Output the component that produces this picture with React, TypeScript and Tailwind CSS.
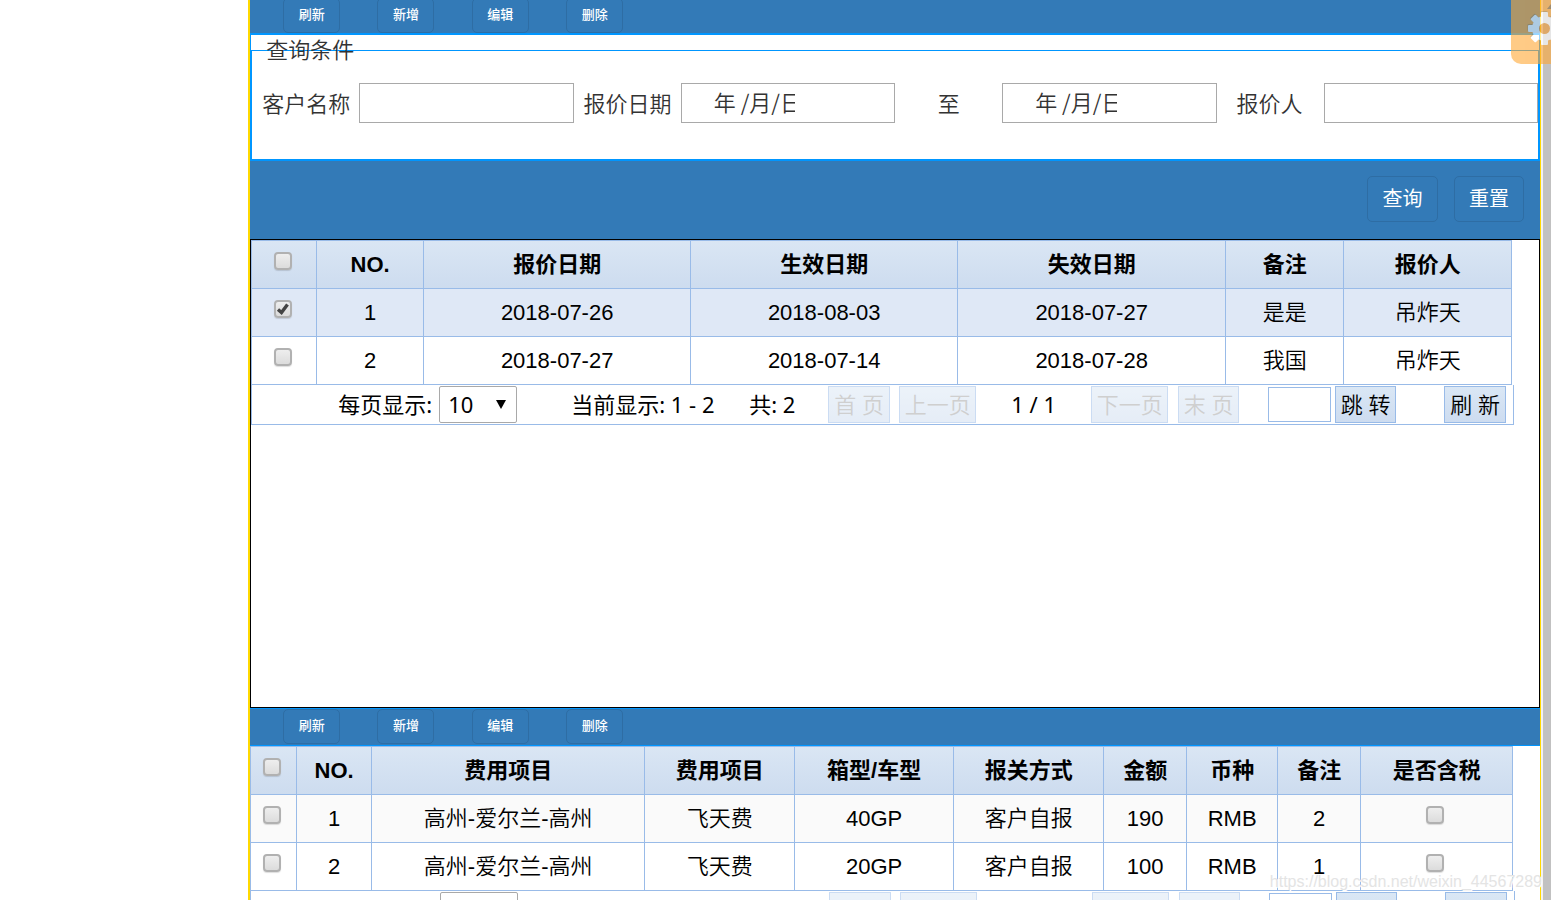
import React from "react";

const CJK = "font-['Noto_Sans_CJK_SC',sans-serif]";
const PAGER_BUTTON =
  "h-[37px] border border-[#99bbe8] bg-linear-to-b from-[#dae7f5] to-[#cddcf0] pb-[2px] text-center leading-[32px] font-[350] whitespace-nowrap disabled:opacity-50 disabled:text-[#a0a0a0]";

function Tick({ label, checked = false }: { label: string; checked?: boolean }) {
  return (
    <span className="inline-grid size-[18px] align-middle">
      <input
        type="checkbox"
        aria-label={label}
        defaultChecked={checked}
        className="peer col-start-1 row-start-1 size-[18px] appearance-none rounded-[4px] border-2 border-[#b1b1b1] bg-linear-to-b from-[#eeeeee] to-[#dcdcdc] shadow-[0_1px_1px_#00000022]"
      />
      <svg
        viewBox="0 0 18 18"
        className="pointer-events-none col-start-1 row-start-1 hidden size-[18px] peer-checked:block"
      >
        <path d="M4 9.5 7.5 12.5 13.5 4.5" fill="none" stroke="#444444" strokeWidth="3.4" />
      </svg>
    </span>
  );
}

function Toolbar({ className }: { className: string }) {
  return (
    <div className={`h-[38px] border-y border-[#0096ff] bg-[#337ab7] pl-[33px] ${className}`}>
      <div className="flex w-[340px] justify-between">
        {["刷新", "新增", "编辑", "删除"].map((name) => (
          <button
            key={name}
            type="button"
            className="h-[35px] w-[57px] shrink-0 rounded-[5px] border border-[#2e6da4] pb-[4px] text-[13px] leading-[20px] font-medium text-white"
          >
            {name}
          </button>
        ))}
      </div>
    </div>
  );
}

type Cell = React.ReactNode;

function Grid({
  cols,
  head,
  rows,
  rowColors,
}: {
  cols: number[];
  head: Cell[];
  rows: Cell[][];
  rowColors: string[];
}) {
  const cell = (c: Cell) => (typeof c === "string" ? "" : "pb-[10px] pr-[3px]");
  return (
    <table className="w-full table-fixed border-separate border-spacing-0 border-l border-t border-[#99bbe8] text-center text-[22px] leading-[32px] text-black">
      <colgroup>
        {cols.map((w, i) => (
          <col key={i} style={{ width: w }} />
        ))}
      </colgroup>
      <thead>
        <tr className="h-[48px]">
          {head.map((c, i) => (
            <th
              key={i}
              className={`border-b border-r border-[#99bbe8] bg-linear-to-b from-[#dae6f4] to-[#cddcef] p-0 font-bold ${cell(c)}`}
            >
              {c}
            </th>
          ))}
        </tr>
      </thead>
      <tbody>
        {rows.map((row, r) => (
          <tr key={r} className={`h-[48px] ${rowColors[r]}`}>
            {row.map((c, i) => (
              <td key={i} className={`border-b border-r border-[#99bbe8] p-0 ${cell(c)}`}>
                {c}
              </td>
            ))}
          </tr>
        ))}
      </tbody>
    </table>
  );
}

function Pager({ id, className }: { id: string; className: string }) {
  return (
    <div
      className={`flex h-[40px] items-start border-b border-r border-[#99bbe8] pt-px font-['Noto_Sans','Noto_Sans_CJK_SC',sans-serif] text-[22px] leading-[36px] font-normal whitespace-nowrap text-black ${className}`}
    >
      <label htmlFor={`${id}-size`} className="w-[101px] shrink-0">
        每页显示:
      </label>
      <span className="grid h-[37px] w-[78px] shrink-0">
        <select
          id={`${id}-size`}
          className="col-start-1 row-start-1 h-[37px] w-full appearance-none rounded-[2px] border border-[#a9a9a9] bg-white pb-[2px] pl-[8px] leading-[32px]"
        >
          <option>10</option>
        </select>
        <svg
          viewBox="0 0 10 9"
          className="pointer-events-none col-start-1 row-start-1 mr-[11px] h-[9px] w-[10px] self-center justify-self-end"
        >
          <path d="M0 0H10L5 9Z" fill="#000" />
        </svg>
      </span>
      <span className="ml-[54px] w-[178px] shrink-0">当前显示: 1 - 2</span>
      <span className="w-[79px] shrink-0">共: 2</span>
      <button type="button" disabled className={`${PAGER_BUTTON} w-[62px]`}>首 页</button>
      <button type="button" disabled className={`${PAGER_BUTTON} ml-[9px] w-[77px]`}>上一页</button>
      <span className="w-[115px] shrink-0 text-center">1 / 1</span>
      <button type="button" disabled className={`${PAGER_BUTTON} w-[77px]`}>下一页</button>
      <button type="button" disabled className={`${PAGER_BUTTON} ml-[10px] w-[61px]`}>末 页</button>
      <input
        type="text"
        aria-label="页码"
        className="mt-px ml-[29px] h-[35px] w-[63px] border border-[#99bbe8] bg-white px-1"
      />
      <button type="button" className={`${PAGER_BUTTON} ml-[4px] w-[61px]`}>跳 转</button>
      <button type="button" className={`${PAGER_BUTTON} ml-[48px] w-[62px]`}>刷 新</button>
    </div>
  );
}

function Field({ id, label, date, className }: { id: string; label: string; date?: boolean; className: string }) {
  return (
    <>
      <label htmlFor={id} className={className}>
        {label}
      </label>
      <input
        id={id}
        type="text"
        defaultValue={date ? "年 /月/日" : ""}
        className="h-[40px] w-full min-w-0 border border-[#a9a9a9] bg-white pr-[99px] pb-[4px] pl-[32px]"
      />
    </>
  );
}

function Gear() {
  return (
    <div className="absolute top-0 right-0 h-[64px] w-[40px] overflow-hidden rounded-bl-[10px] bg-[#ffa835] opacity-60">
      <svg viewBox="0 0 40 64" className="h-[64px] w-[40px]">
        <path d="M36 9 40 4V9Z" fill="#8a6a3a" />
        <g fill="#c58c3c" transform="translate(33 27.5)">
          {[0, 45, 90, 135].map((a) => (
            <rect key={a} x="-3.5" y="-16.5" width="7" height="33" rx="1" transform={`rotate(${a})`} />
          ))}
        </g>
        <g fill="#ffffff" transform="translate(33.5 28.5)">
          <circle r="12.5" />
          {[0, 45, 90, 135].map((a) => (
            <rect key={a} x="-3.5" y="-16.5" width="7" height="33" rx="1" transform={`rotate(${a})`} />
          ))}
        </g>
        <circle cx="33.5" cy="28.5" r="5.5" fill="#f0982f" />
      </svg>
    </div>
  );
}

export default function App() {
  return (
    <div className={`relative flex h-screen overflow-hidden bg-white text-[22px] font-[350] text-[#333333] ${CJK}`}>
      <aside className="w-[16%] shrink-0" />
      <main className="min-w-0 flex-1 border-r border-l-2 border-[#ffd900]">
        <Toolbar className="-mt-[4px] pt-px" />
        <form className="border border-[#0096ff]">
          <div className="mt-[15px] border border-[#0096ff]">
            <h2 className="-mt-[19px] h-[51px] pl-[14px] leading-[32px] font-[350]">查询条件</h2>
            <div className="grid h-[76px] grid-cols-[repeat(4,1fr_2fr)] items-start leading-[38px] whitespace-nowrap">
              <Field id="customer" label="客户名称" className="pl-[10px]" />
              <Field id="date-from" label="报价日期" date className="pl-[10px]" />
              <Field id="date-to" label="至" date className="text-center" />
              <Field id="quoter" label="报价人" className="pl-[20px]" />
            </div>
          </div>
        </form>
        <div className="flex h-[78px] justify-end gap-[16px] bg-[#337ab7] pt-[15px] pr-[16px] text-[20px] leading-[28px] font-normal text-white">
          <button type="button" className="h-[46px] w-[71px] rounded-[5px] border border-[#2e6da4] pb-[2px]">查询</button>
          <button type="button" className="h-[46px] w-[70px] rounded-[5px] border border-[#2e6da4] pb-[2px]">重置</button>
        </div>
        <section className="h-[469px] border border-black">
          <div className="mr-[27px] font-['Liberation_Sans','Noto_Sans_CJK_SC',sans-serif]">
            <Grid
              cols={[65, 107, 267, 267, 268, 118, 168]}
              head={[<Tick label="全选报价" />, "NO.", "报价日期", "生效日期", "失效日期", "备注", "报价人"]}
              rows={[
                [<Tick label="选择报价 1" checked />, "1", "2018-07-26", "2018-08-03", "2018-07-27", "是是", "吊炸天"],
                [<Tick label="选择报价 2" />, "2", "2018-07-27", "2018-07-14", "2018-07-28", "我国", "吊炸天"],
              ]}
              rowColors={["bg-[#dfe8f6]", "bg-white"]}
            />
          </div>
          <Pager id="quotes" className="mr-[25px] border-l pl-[86px]" />
        </section>
        <Toolbar className="" />
        <section>
          <div className="mr-[27px] font-['Liberation_Sans','Noto_Sans_CJK_SC',sans-serif]">
            <Grid
              cols={[46, 75, 273, 150, 159, 150, 83, 91, 83, 152]}
              head={[<Tick label="全选费用" />, "NO.", "费用项目", "费用项目", "箱型/车型", "报关方式", "金额", "币种", "备注", "是否含税"]}
              rows={[
                [<Tick label="选择费用 1" />, "1", "高州-爱尔兰-高州", "飞天费", "40GP", "客户自报", "190", "RMB", "2", <Tick label="费用 1 含税" />],
                [<Tick label="选择费用 2" />, "2", "高州-爱尔兰-高州", "飞天费", "20GP", "客户自报", "100", "RMB", "1", <Tick label="费用 2 含税" />],
              ]}
              rowColors={["bg-[#fafafa]", "bg-white"]}
            />
          </div>
          <Pager id="fees" className="mr-[25px] border-l pl-[88px]" />
        </section>
      </main>
      <div className="w-[10px] shrink-0 border-l-2 border-[#f1f1f1] bg-[#c1c1c1]" />
      <Gear />
      <p className="absolute right-[9px] bottom-[8px] font-['Liberation_Sans',sans-serif] text-[16px] leading-[20px] text-[#e4e4e4] [text-shadow:1px_1px_0_#ffffff]">
        https://blog.csdn.net/weixin_44567289
      </p>
    </div>
  );
}
